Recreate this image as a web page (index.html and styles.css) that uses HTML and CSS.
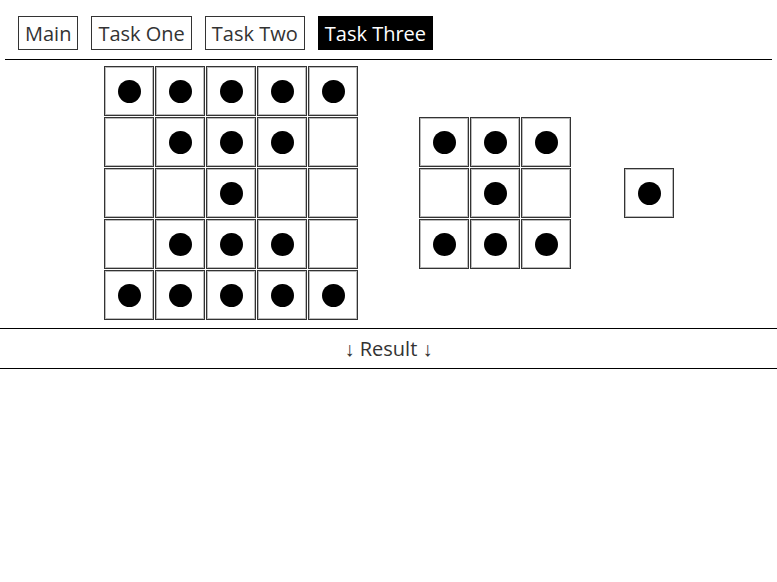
FILE: index.html
```html
<!DOCTYPE html>
<html>
<head>
<meta charset="utf-8">
<link rel="stylesheet" href="styles.css">
</head>
<body>
<nav class="nav">
  <a class="tab">Main</a>
  <a class="tab">Task One</a>
  <a class="tab">Task Two</a>
  <a class="tab tab-active">Task Three</a>
</nav>
<hr class="rule">
<section class="board">
  <div class="grid grid-5 grid-first">
    <div class="cell"><span class="dot"></span></div>
    <div class="cell"><span class="dot"></span></div>
    <div class="cell"><span class="dot"></span></div>
    <div class="cell"><span class="dot"></span></div>
    <div class="cell"><span class="dot"></span></div>
    <div class="cell"></div>
    <div class="cell"><span class="dot"></span></div>
    <div class="cell"><span class="dot"></span></div>
    <div class="cell"><span class="dot"></span></div>
    <div class="cell"></div>
    <div class="cell"></div>
    <div class="cell"></div>
    <div class="cell"><span class="dot"></span></div>
    <div class="cell"></div>
    <div class="cell"></div>
    <div class="cell"></div>
    <div class="cell"><span class="dot"></span></div>
    <div class="cell"><span class="dot"></span></div>
    <div class="cell"><span class="dot"></span></div>
    <div class="cell"></div>
    <div class="cell"><span class="dot"></span></div>
    <div class="cell"><span class="dot"></span></div>
    <div class="cell"><span class="dot"></span></div>
    <div class="cell"><span class="dot"></span></div>
    <div class="cell"><span class="dot"></span></div>
  </div>
  <div class="grid grid-3 grid-second">
    <div class="cell"><span class="dot"></span></div>
    <div class="cell"><span class="dot"></span></div>
    <div class="cell"><span class="dot"></span></div>
    <div class="cell"></div>
    <div class="cell"><span class="dot"></span></div>
    <div class="cell"></div>
    <div class="cell"><span class="dot"></span></div>
    <div class="cell"><span class="dot"></span></div>
    <div class="cell"><span class="dot"></span></div>
  </div>
  <div class="grid grid-1">
    <div class="cell"><span class="dot"></span></div>
  </div>
</section>
<div class="result"><span class="arrow">↓</span> Result <span class="arrow">↓</span></div>
</body>
</html>
```

FILE: styles.css
```css
html, body {
  margin: 0;
  padding: 0;
  background: #fff;
}
body {
  font-family: "Open Sans", "DejaVu Sans", sans-serif;
  color: #333;
}
.nav {
  display: flex;
  gap: 13px;
  padding: 16px 0 0 18px;
}
.tab {
  display: block;
  font-size: 20px;
  line-height: 27px;
  padding: 3px 6px 2px;
  border: 1px solid #333;
  color: #333;
}
.tab-active {
  background: #000;
  border-color: #000;
  color: #fff;
}
.rule {
  margin: 9px 5px 0;
  border: 0;
  border-top: 1px solid #000;
  height: 0;
}
.board {
  display: flex;
  align-items: center;
  padding: 6px 0 7px 104px;
}
.grid {
  display: grid;
  gap: 1px;
  padding: 0 1px 1px 0;
}
.grid-5 { grid-template-columns: repeat(5, 50px); }
.grid-3 { grid-template-columns: repeat(3, 50px); }
.grid-1 { grid-template-columns: 50px; }
.grid-first { margin-right: 60px; }
.grid-second { margin-right: 52px; }
.cell {
  box-sizing: border-box;
  width: 50px;
  height: 50px;
  border: 1px solid #333;
  box-shadow: inset 0 0 0 1px #bbb;
  display: flex;
  align-items: center;
  justify-content: center;
  background: #fff;
}
.dot {
  width: 23px;
  height: 23px;
  border-radius: 50%;
  background: #000;
}
.result {
  border-top: 1px solid #000;
  border-bottom: 1px solid #000;
  height: 38px;
  padding-top: 1px;
  line-height: 38px;
  text-align: center;
  font-size: 20px;
  color: #333;
}
.arrow {
  font-family: "Liberation Sans", sans-serif;
}
```
